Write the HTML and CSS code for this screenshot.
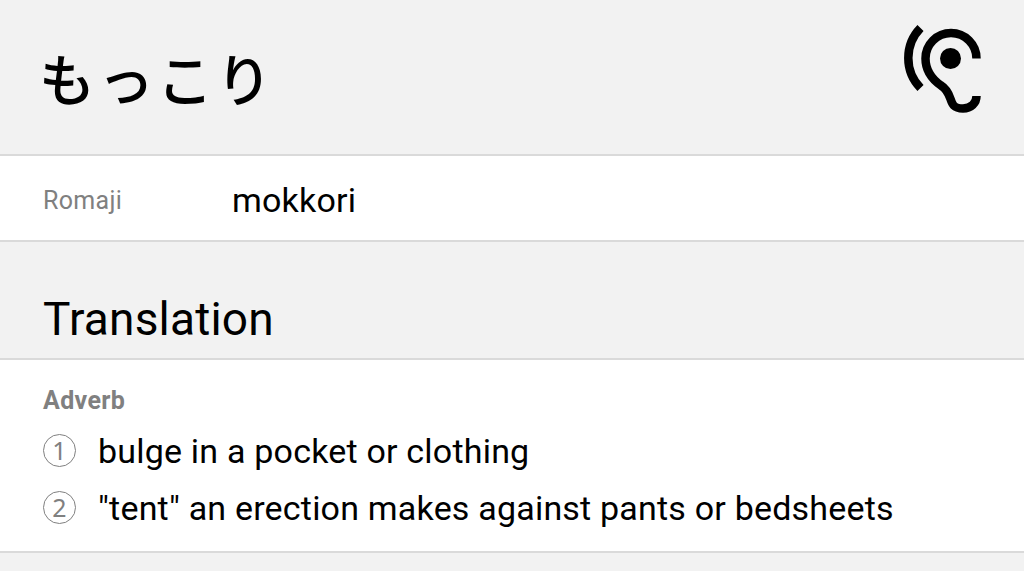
FILE: index.html
```html
<!DOCTYPE html>
<html lang="en">
<head>
  <meta charset="UTF-8">
  <meta name="viewport" content="width=device-width, initial-scale=1.0">
  <title>もっこり</title>
  <link rel="stylesheet" href="styles.css">
</head>
<body>
  <!-- Word and listen button -->
  <header class="word-header">
    <h1 lang="ja">もっこり</h1>
    <svg class="listen-icon" viewBox="0 0 80 92" role="img" aria-label="Listen">
      <path d="M17.500 4 A43 43 0 0 0 17.500 64" fill="none" stroke="#000" stroke-width="8.500"/>
      <path d="M73.500 34.500 A25.500 25.500 0 0 0 48 9 A25.500 25.500 0 0 0 22.500 34.500 C22.500 46 28 54.500 38 61.500 C52 70 43 84.500 60 84.500 C68 84.500 73.500 79 73.500 72" fill="none" stroke="#000" stroke-width="8.500"/>
      <circle cx="47.500" cy="34.500" r="10.500"/>
    </svg>
  </header>

  <div class="romaji-row">
    <span class="label">Romaji</span>
    <span class="value">mokkori</span>
  </div>

  <h2 class="section-title">Translation</h2>

  <!-- Meanings -->
  <section class="meanings">
    <h3>Adverb</h3>
    <ol>
      <li><span class="number">1</span><span class="meaning">bulge in a pocket or clothing</span></li>
      <li><span class="number">2</span><span class="meaning">"tent" an erection makes against pants or bedsheets</span></li>
    </ol>
  </section>
</body>
</html>
```

FILE: styles.css
```css
* {
  box-sizing: border-box;
}
body {
  margin: 0;
  height: 571px;
  overflow: hidden;
  background-color: #f2f2f2;
  color: #000;
  font-family: Roboto, "Noto Sans CJK JP", sans-serif;
}
h1, h2, h3, ol {
  margin: 0;
  padding: 0;
  font-weight: 400;
}
.word-header {
  display: flex;
  justify-content: space-between;
  height: 154px;
  padding: 24px 41px 0 39px;
}
h1 {
  padding-top: 11px;
  font-family: "Noto Sans CJK JP", sans-serif;
  font-size: 56px;
  font-weight: 500;
  letter-spacing: 3px;
  line-height: 84px;
}
.listen-icon {
  width: 80px;
  height: 92px;
  overflow: visible;
}
.romaji-row {
  display: flex;
  align-items: center;
  height: 88px;
  padding: 4px 43px 0;
  background-color: #fff;
  border-top: 2px solid #dadada;
  border-bottom: 2px solid #dadada;
}
.label {
  width: 189px;
  color: #808080;
  font-size: 25px;
  letter-spacing: 0.3px;
}
.value {
  font-size: 34px;
  letter-spacing: 0.2px;
}
.section-title {
  height: 116px;
  padding: 47px 43px 0;
  font-size: 46px;
  letter-spacing: 0.2px;
  line-height: 60px;
}
.meanings {
  height: 195px;
  padding: 25px 43px 0;
  background-color: #fff;
  border-top: 2px solid #dadada;
  border-bottom: 2px solid #dadada;
}
h3 {
  color: #808080;
  font-size: 25px;
  font-weight: 700;
  letter-spacing: 0.35px;
  line-height: 32px;
}
ol {
  margin-top: 5px;
  list-style: none;
}
li {
  display: flex;
  align-items: center;
  height: 57px;
}
.number {
  width: 33px;
  height: 33px;
  margin-right: 22px;
  border: 1px solid #808080;
  border-radius: 50%;
  color: #808080;
  font-family: "Noto Sans", sans-serif;
  font-size: 25px;
  line-height: 30px;
  text-align: center;
}
.meaning {
  padding-top: 1px;
  font-size: 34px;
  letter-spacing: 0.2px;
}
```
